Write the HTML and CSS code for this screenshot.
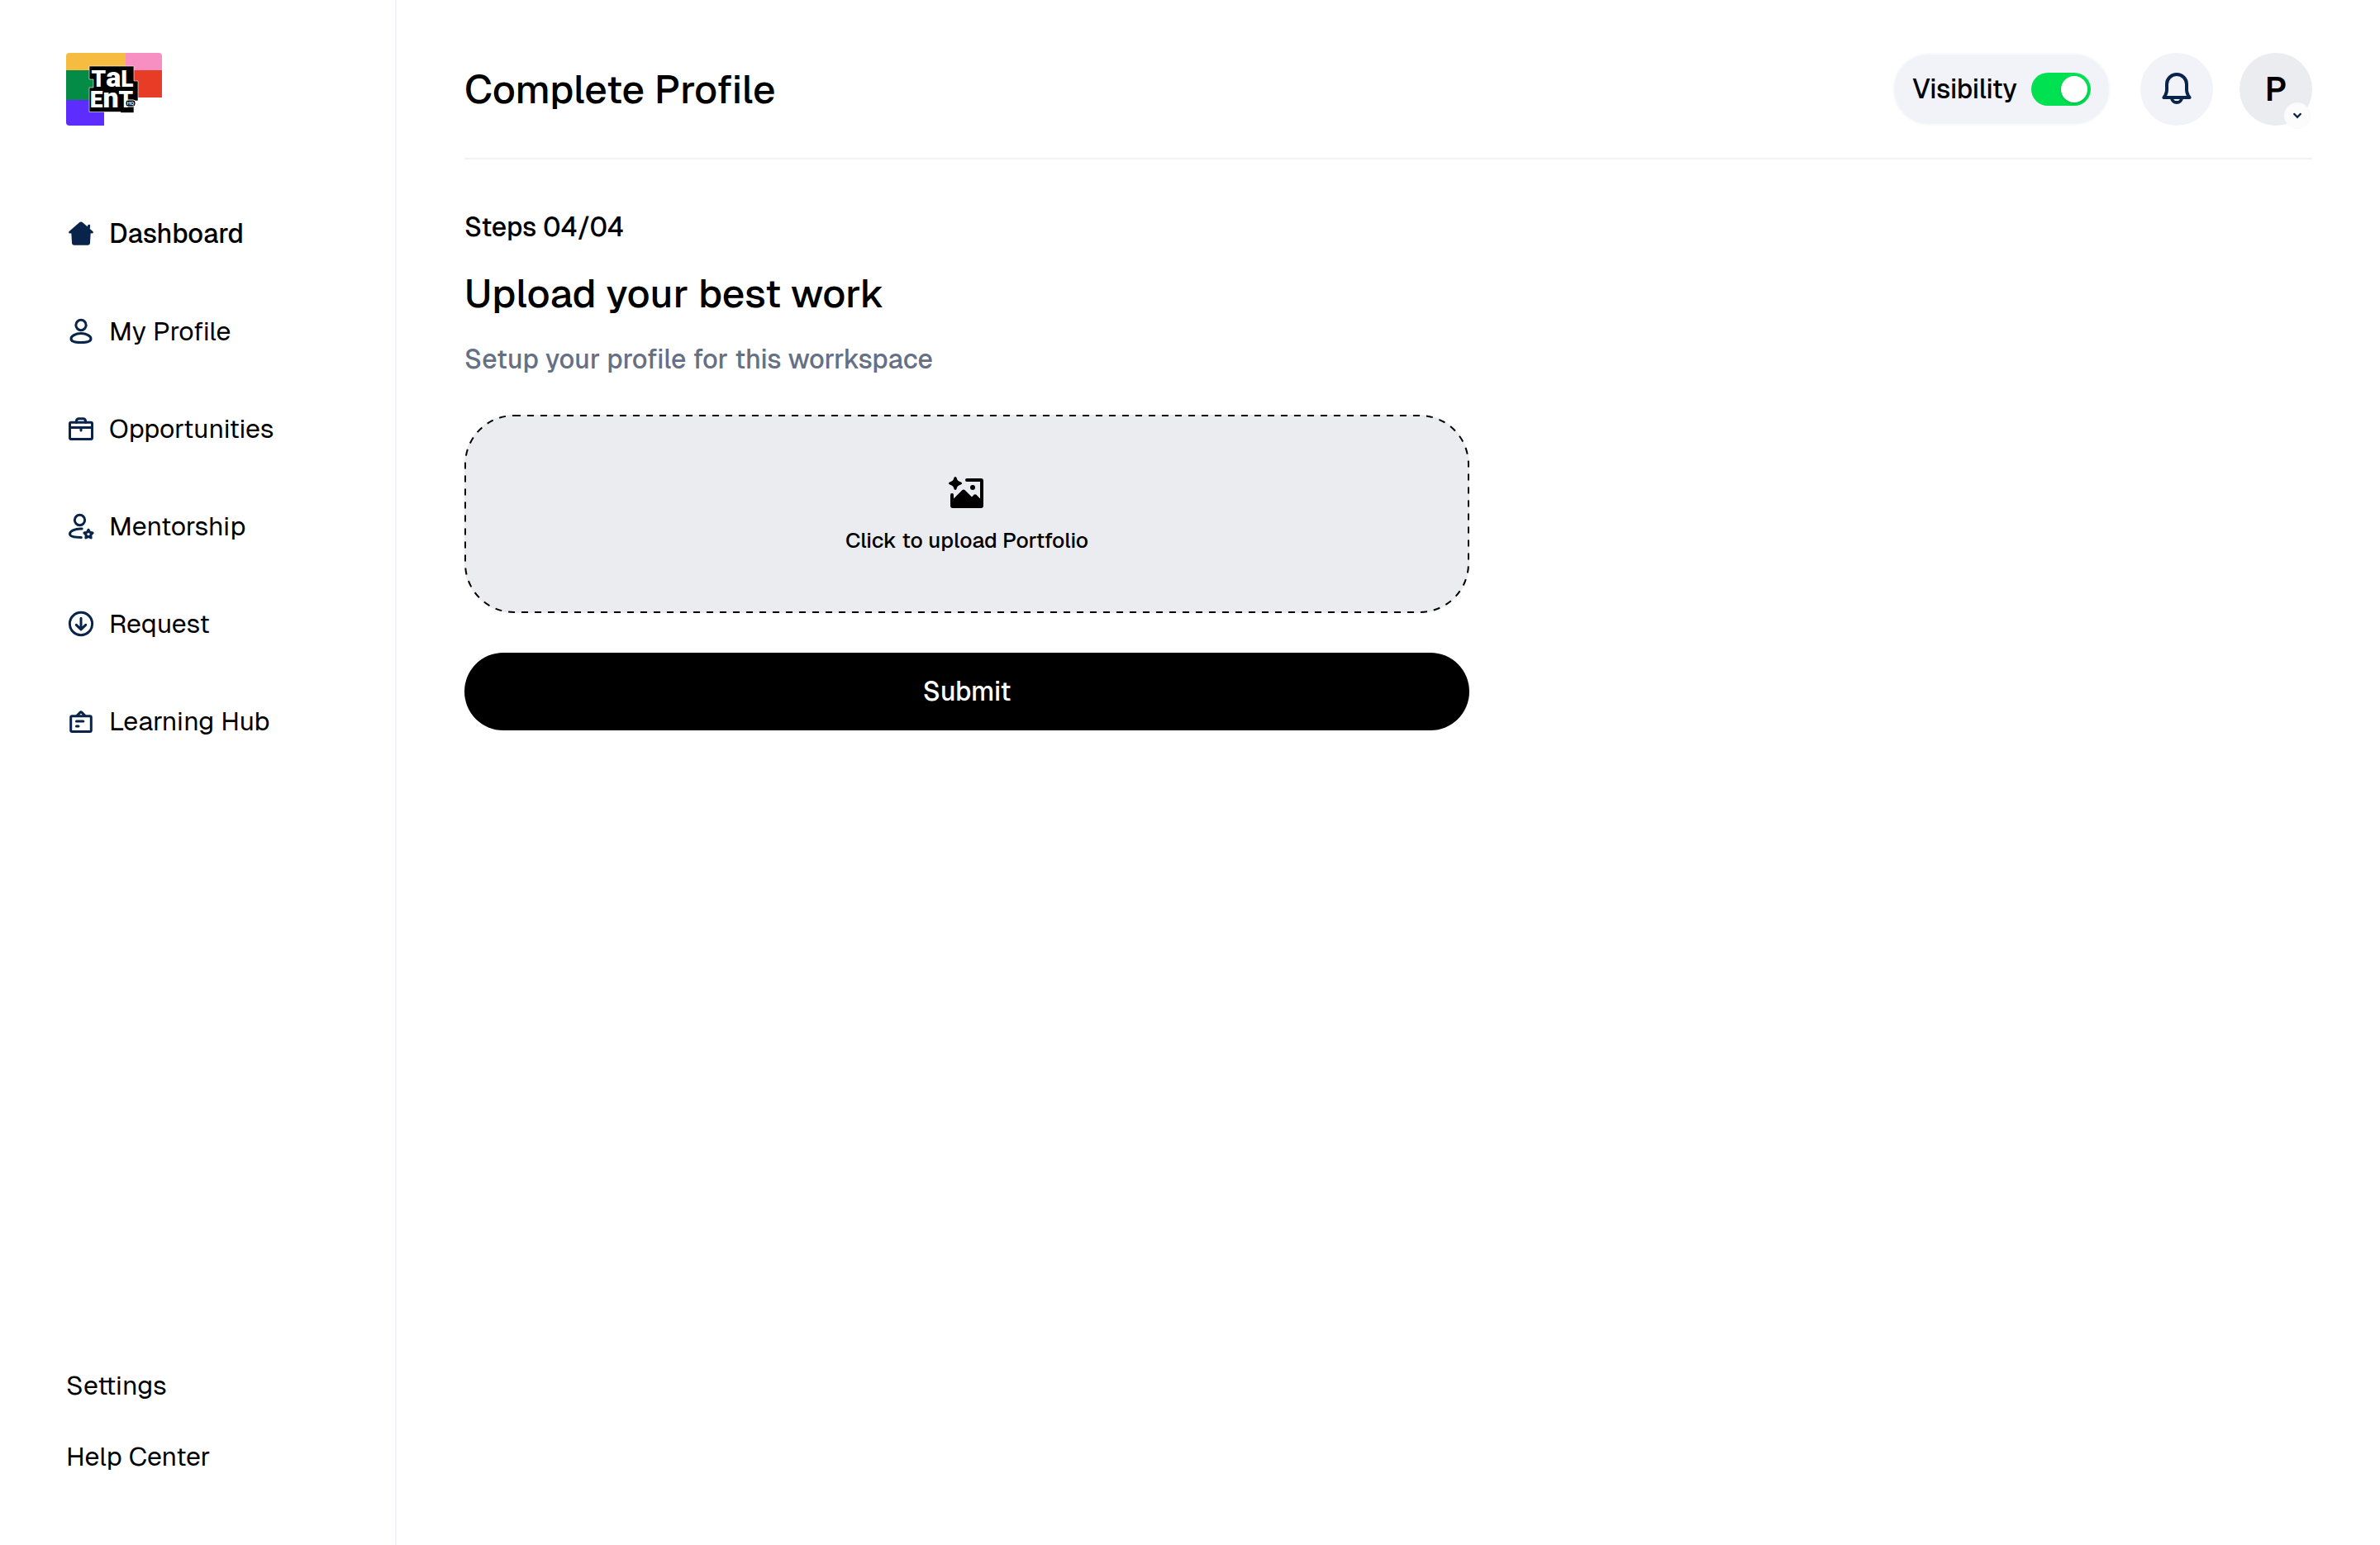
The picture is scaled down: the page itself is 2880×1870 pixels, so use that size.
FILE: index.html
```html
<!DOCTYPE html>
<html lang="en">
<head>
<meta charset="utf-8">
<title>Complete Profile</title>
<link rel="stylesheet" href="styles.css">
</head>
<body>
<div class="app">
  <aside class="sidebar">
    <a class="logo" href="#" aria-label="Talent HQ">
      <svg viewBox="0 0 116 88" width="116" height="88">
        <path fill="#f6bc41" d="M4 0H72V21H0V4a4 4 0 0 1 4-4z"/>
        <path fill="#f78fc3" d="M72 0H112a4 4 0 0 1 4 4V21H72z"/>
        <path fill="#048c47" d="M0 21H40V57H0z"/>
        <path fill="#e73c26" d="M80 21H116V54H80z"/>
        <path fill="#5d2dff" d="M0 57H46V88H4a4 4 0 0 1-4-4z"/>
        <path fill="#000" stroke="#fff" stroke-opacity=".6" d="M28 16H82V34H87V58H82V72.500H66V71.500H28V42H33V32H28z"/>
        <text class="logo-word" x="56" y="41" text-anchor="middle">T<tspan class="logo-tall">a</tspan>L</text>
        <text class="logo-word" x="55" y="66" text-anchor="middle">E<tspan class="logo-tall">n</tspan>T</text>
        <rect x="72" y="57" width="12" height="8" rx="3" fill="#000" stroke="#fff"/>
        <text class="logo-tag" x="78" y="63" text-anchor="middle">HQ</text>
      </svg>
    </a>
    <nav class="nav">
      <a class="nav-link active" href="#">
        <svg class="icon" viewBox="0 0 24 24"><path fill="currentColor" d="M10.300 3.200a2.500 2.500 0 0 1 3.400 0l3.500 2.900.4-1.200c.3-.8 1.900-.5 1.800.4l-.2 2.700 2.300 2c.9.800.2 2-.9 1.700l-.8-.2-.5 7.800a1.900 1.900 0 0 1-1.900 1.800H6.600a1.900 1.900 0 0 1-1.900-1.800l-.5-7.800-.8.200c-1.100.3-1.800-.9-.9-1.700z"/></svg>
        <span>Dashboard</span>
      </a>
      <a class="nav-link" href="#">
        <svg class="icon" viewBox="0 0 24 24"><circle cx="12" cy="7" r="4.100"/><path d="M20 18c0 2-3.500 3-8 3s-8-1-8-3c0-2 3.500-4.300 8-4.300s8 2.300 8 4.300z"/></svg>
        <span>My Profile</span>
      </a>
      <a class="nav-link" href="#">
        <svg class="icon" viewBox="0 0 24 24"><rect x="3" y="6.900" width="18" height="13.400" rx="1"/><path d="M3 11h18M12 11v2.400M8.200 6.800c0-2 .6-2.900 2-2.900h3.600c1.400 0 2 .9 2 2.900"/></svg>
        <span>Opportunities</span>
      </a>
      <a class="nav-link" href="#">
        <svg class="icon" viewBox="0 0 24 24"><circle cx="11" cy="7" r="4.100"/><path d="M12.800 14C7.500 13.600 3 15.800 3 18.200c0 2 4 2.800 9.200 2.800"/><path d="M18 14.800l1.100 2.100 2.300.4-1.600 1.700.3 2.300-2.100-1-2.100 1 .3-2.300-1.600-1.700 2.300-.4z"/></svg>
        <span>Mentorship</span>
      </a>
      <a class="nav-link" href="#">
        <svg class="icon" viewBox="0 0 24 24"><circle cx="12" cy="12" r="9.100"/><path d="M12 7.500v8.800M8.200 12.900l3.800 3.700 3.800-3.700"/></svg>
        <span>Request</span>
      </a>
      <a class="nav-link" href="#">
        <svg class="icon" viewBox="0 0 24 24"><rect x="3.800" y="7.900" width="16.400" height="12.400" rx="1"/><path d="M8.700 7.600L11.300 4.900q.7-.7 1.400 0l2.600 2.700M8.300 12h5.600M8.300 16h1.700"/></svg>
        <span>Learning Hub</span>
      </a>
    </nav>
    <nav class="nav-foot">
      <a href="#">Settings</a>
      <a href="#">Help Center</a>
    </nav>
  </aside>
  <div class="page">
    <header class="topbar">
      <h1 class="heading">Complete Profile</h1>
      <div class="actions">
        <div class="visibility">
          <label for="visibility">Visibility</label>
          <input class="switch" id="visibility" type="checkbox" role="switch" checked>
        </div>
        <div class="account">
          <button class="round bell" type="button" aria-label="Notifications">
            <svg viewBox="0 0 24 24" width="48" height="48"><path d="M12 3a6 6 0 0 0-6 6v3.500c0 1.200-.3 2-.8 3L4.200 17h15.600l-1-1.500c-.5-1-.8-1.800-.8-3V9a6 6 0 0 0-6-6zM9 17.200a3 2.800 0 0 0 6 0"/></svg>
          </button>
          <button class="round avatar" type="button" aria-label="Account menu">
            P
            <span class="caret"><svg viewBox="0 0 10 8" width="10" height="8"><path d="M1.300 2L5 5.800 8.700 2"/></svg></span>
          </button>
        </div>
      </div>
    </header>
    <main class="content">
      <p class="step">Steps 04/04</p>
      <h2 class="heading">Upload your best work</h2>
      <p class="hint">Setup your profile for this worrkspace</p>
      <form class="form">
        <label class="dropzone" for="portfolio">
          <svg class="outline" aria-hidden="true"><rect x="1" y="1" rx="59"/></svg>
          <svg viewBox="0 0 24 24" width="48" height="48"><path d="M5 2.500c.5 0 .7.400.9 1 .4 1.300.9 1.700 2.100 2.100.6.200 1 .4 1 .9s-.4.700-1 .9c-1.200.4-1.700.8-2.100 2.100-.2.600-.4 1-.9 1s-.7-.4-.9-1C3.700 8.200 3.200 7.800 2 7.400c-.6-.2-1-.4-1-.9s.4-.7 1-.9c1.200-.4 1.700-.8 2.100-2.100.2-.6.400-1 .9-1z"/><path d="M13 3.500H20.500A1.500 1.500 0 0 1 22 5V20a1.500 1.500 0 0 1-1.500 1.500H3.500A1.500 1.500 0 0 1 2 20V13.500a1 1 0 0 1 2 0V15.700L9.300 10.500q.7-.6 1.400 0L15 14.700l1.300-1.300q.7-.6 1.400 0L20 15.700V5.500H12a1 1 0 0 1-1-1 1 1 0 0 1 1-1z"/><circle cx="15.500" cy="9" r="1.500"/></svg>
          <span>Click to upload Portfolio</span>
          <input class="file" id="portfolio" type="file">
        </label>
        <button class="submit" type="submit">Submit</button>
      </form>
    </main>
  </div>
</div>
</body>
</html>
```
FILE: styles.css
```css
* {
  box-sizing: border-box;
}

body {
  margin: 0;
  background: #fff;
  color: #000;
  font: 400 32px/48px Geist, Inter, "Liberation Sans", sans-serif;
}

h1, h2, p {
  margin: 0;
}

a {
  color: inherit;
  text-decoration: none;
}

button {
  border: 0;
  padding: 0;
  font: inherit;
  color: inherit;
  cursor: pointer;
}

.app {
  display: flex;
  min-height: 100vh;
}

.sidebar {
  display: flex;
  flex: 0 0 480px;
  flex-direction: column;
  padding: 64px 40px 83px 80px;
  border-right: 2px solid #f2f3f8;
}

.logo {
  align-self: flex-start;
  margin-bottom: 107px;
}

.logo svg {
  display: block;
}

.logo-word {
  fill: #fff;
  font: 900 28px "Liberation Sans Narrow", Roboto, sans-serif;
}

.logo-tall {
  font-size: 34px;
}

.logo-tag {
  fill: #fff;
  font: 700 6px Roboto, sans-serif;
}

.nav {
  display: flex;
  flex-direction: column;
  gap: 70px;
}

.nav-link {
  display: flex;
  align-items: center;
  gap: 16px;
}

.nav-link.active {
  font-weight: 500;
}

.icon {
  width: 36px;
  height: 36px;
  color: #08244b;
}

.icon :not([fill]) {
  fill: none;
  stroke: currentColor;
  stroke-width: 2;
  stroke-linecap: round;
  stroke-linejoin: round;
}

.nav-foot {
  display: flex;
  flex-direction: column;
  gap: 38px;
  margin-top: auto;
}

.page {
  flex: 1;
  min-width: 0;
  padding: 64px 82px;
}

.topbar {
  display: flex;
  align-items: center;
  justify-content: space-between;
  padding-bottom: 39px;
  border-bottom: 2px solid #f2f3f8;
}

.heading {
  font-size: 48px;
  font-weight: 500;
  line-height: 64px;
}

.actions {
  display: flex;
  gap: 36px;
}

.visibility {
  display: flex;
  align-items: center;
  gap: 17px;
  height: 88px;
  padding: 0 22px;
  border: 2px solid #f9fafb;
  border-radius: 44px;
  background: #f2f3f8;
  font-weight: 500;
}

.switch {
  appearance: none;
  width: 72px;
  height: 40px;
  margin: 0;
  padding: 4px;
  border-radius: 20px;
  background: #d0d5dd;
}

.switch::before {
  content: "";
  display: block;
  width: 32px;
  height: 32px;
  border-radius: 50%;
  background: #fff;
  box-shadow: 0 2px 4px rgba(0, 0, 0, 0.15);
}

.switch:checked {
  background: #00e152;
}

.switch:checked::before {
  margin-left: auto;
}

.account {
  display: flex;
  gap: 32px;
}

.round {
  display: grid;
  place-items: center;
  width: 88px;
  height: 88px;
  border-radius: 50%;
}

.bell {
  background: #f2f3f8;
}

.bell path {
  fill: none;
  stroke: #08244b;
  stroke-width: 2;
  stroke-linejoin: round;
}

.avatar {
  position: relative;
  background: #ebecf0;
  font-size: 40px;
  font-weight: 600;
}

.caret {
  position: absolute;
  right: 2px;
  bottom: -4px;
  display: grid;
  place-items: center;
  width: 32px;
  height: 32px;
  border: 2px solid #f9fafb;
  border-radius: 50%;
  background: #fcfcfd;
}

.caret path {
  fill: none;
  stroke: #08244b;
  stroke-width: 2.4;
  stroke-linecap: round;
}

.content {
  max-width: 1216px;
  padding-top: 58px;
}

.step {
  margin-bottom: 24px;
  font-weight: 500;
}

.hint {
  margin-top: 24px;
  color: #667085;
  font-weight: 500;
}

.form {
  display: flex;
  flex-direction: column;
  gap: 48px;
  margin-top: 43px;
}

.dropzone {
  display: flex;
  flex-direction: column;
  align-items: center;
  justify-content: center;
  gap: 16px;
  position: relative;
  height: 240px;
  border-radius: 60px;
  background: #ebecf0;
  font-size: 26px;
  font-weight: 500;
  line-height: 36px;
}

.outline {
  position: absolute;
  inset: 0;
  width: 100%;
  height: 100%;
}

.outline rect {
  width: calc(100% - 2px);
  height: calc(100% - 2px);
  fill: none;
  stroke: #000;
  stroke-width: 2;
  stroke-dasharray: 8;
}

.file {
  position: absolute;
  inset: 0;
  opacity: 0;
}

.submit {
  height: 94px;
  border-radius: 47px;
  background: #000;
  color: #fff;
  font-weight: 500;
}
```
